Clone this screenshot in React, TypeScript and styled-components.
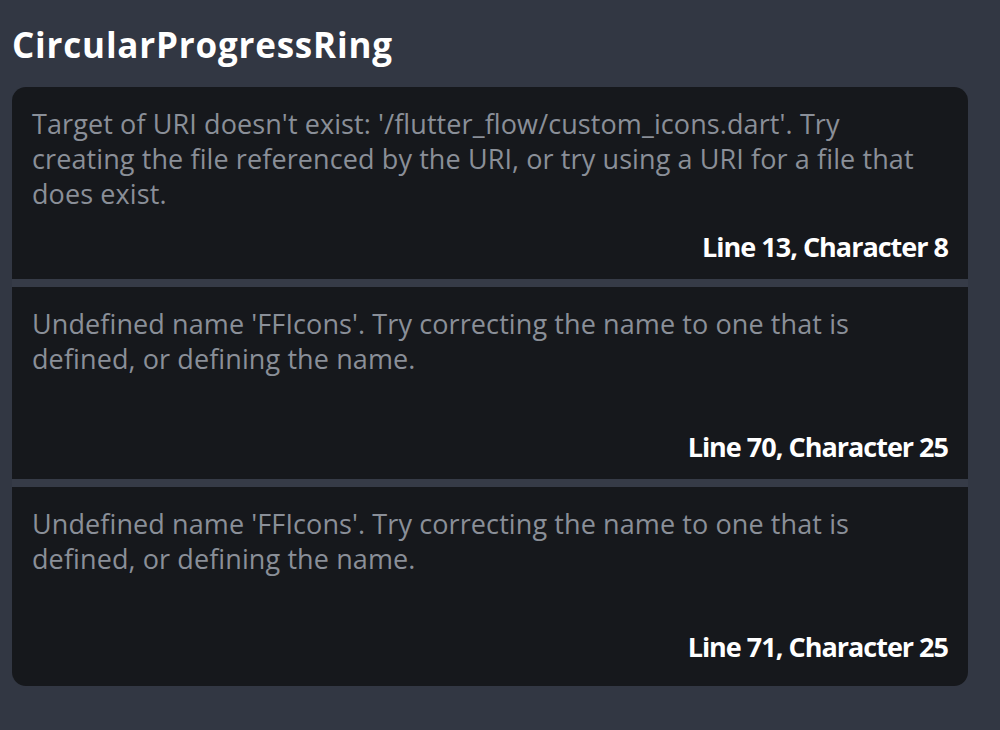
import * as React from 'react';
import styled, { createGlobalStyle } from 'styled-components';

interface Issue {
	message: string;
	line: number;
	character: number;
}

const issues: Issue[] = [
	{
		message:
			"Target of URI doesn't exist: '/flutter_flow/custom_icons.dart'. Try creating the file referenced by the URI, or try using a URI for a file that does exist.",
		line: 13,
		character: 8,
	},
	{
		message:
			"Undefined name 'FFIcons'. Try correcting the name to one that is defined, or defining the name.",
		line: 70,
		character: 25,
	},
	{
		message:
			"Undefined name 'FFIcons'. Try correcting the name to one that is defined, or defining the name.",
		line: 71,
		character: 25,
	},
];

const App = () => {
	return (
		<>
			<GlobalStyle />
			<Root>
				<Title>CircularProgressRing</Title>
				<IssueList>
					{issues.map((issue, i) => (
						<IssueItem key={i}>
							<Message>{issue.message}</Message>
							<Location>
								Line {issue.line}, Character {issue.character}
							</Location>
						</IssueItem>
					))}
				</IssueList>
			</Root>
		</>
	);
};

export default App;

const fontStack = `'Open Sans', 'Noto Sans', sans-serif`;

const GlobalStyle = createGlobalStyle`
	html, body {
		margin: 0;
		padding: 0;
		background-color: #323743;
	}
	body {
		font-family: ${fontStack};
	}
`;

const Root = styled.div`
	box-sizing: border-box;
	width: 1000px;
	height: 730px;
	padding: 20px 32px 0 12px;
	background-color: #323743;
	display: flex;
	flex-direction: column;
`;

const Title = styled.h1`
	margin: 0 0 17px 0;
	font-family: ${fontStack};
	font-size: 35px;
	line-height: 50px;
	font-weight: 700;
	color: #ffffff;
	letter-spacing: 0.8px;
`;

const IssueList = styled.div`
	display: flex;
	flex-direction: column;
	gap: 8px;
	border-radius: 14px;
	overflow: hidden;
	background-color: #363b47;
`;

const IssueItem = styled.div`
	display: flex;
	flex-direction: column;
	padding: 19px 20px 15px 20px;
	background-color: #16181c;

	&:last-child {
		padding-bottom: 22px;
	}
`;

const Message = styled.div`
	min-height: 105px;
	font-size: 27px;
	line-height: 35px;
	color: #8a8f98;
	letter-spacing: 0.1px;
`;

const Location = styled.div`
	margin-top: 19px;
	text-align: right;
	font-size: 27px;
	line-height: 34px;
	font-weight: 700;
	color: #ffffff;
	letter-spacing: -1px;
`;
